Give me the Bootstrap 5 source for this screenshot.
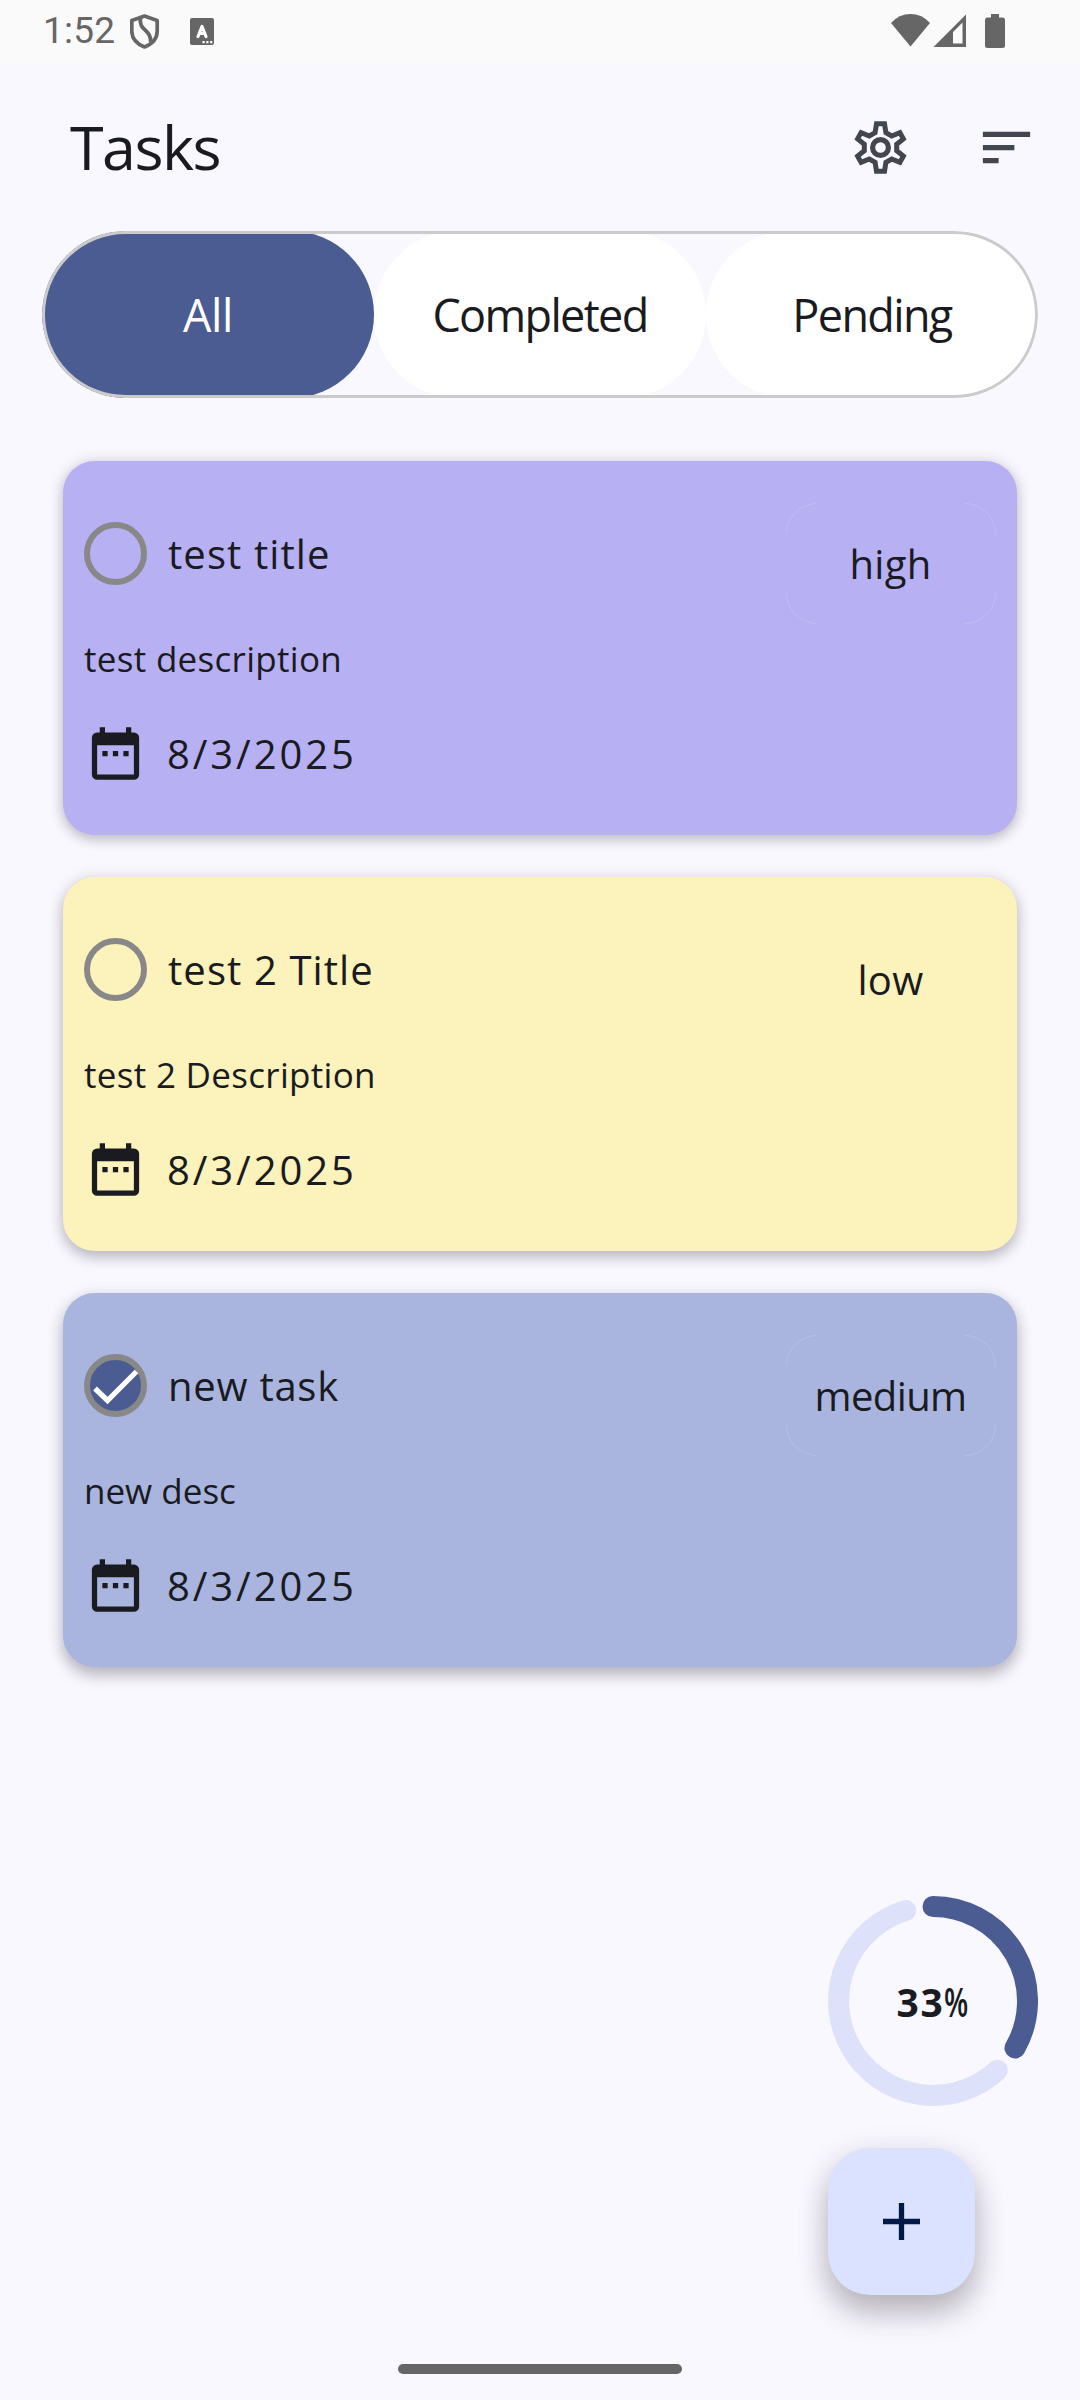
<!DOCTYPE html>
<html lang="en">
<head>
<meta charset="utf-8">
<meta name="viewport" content="width=device-width, initial-scale=1">
<title>Tasks</title>
<link rel="stylesheet" href="https://cdn.jsdelivr.net/npm/bootstrap@5.3.0/dist/css/bootstrap.min.css">
<script src="https://cdn.jsdelivr.net/npm/bootstrap@5.3.0/dist/js/bootstrap.bundle.min.js"></script>
<style>
  body { background: #f9f8ff; color: #1a1b20; font-family: "Open Sans", sans-serif; }
  svg { display: block; flex: none; }
  .screen { width: 1080px; height: 2400px; overflow: hidden; }
  .statusbar { height: 63px; background: #fafafa; color: #666; padding: 0 75px 0 43px; font: 400 37px/62px Roboto, sans-serif; }
  .clock { letter-spacing: .2px; width: 87px; }
  .appbar { height: 168px; padding: 0 42px 0 70px; }
  .appbar h1 { font-size: 61px; line-height: 62px; font-weight: 500; letter-spacing: -1.5px; margin: 0; }
  .appbar .btn-icon { padding: 0; border: 0; color: #44464f; }
  .tabs { width: 996px; height: 167px; margin: 0 42px; position: relative; border-radius: 84px; overflow: hidden; }
  .tabs::after { content: ""; position: absolute; inset: 0; border: 3px solid #cbcbcb; border-radius: 84px; pointer-events: none; }
  .tabs .nav-link { height: 167px; line-height: 167px; padding: 0; border-radius: 84px; background: #fff; color: #1a1b20; font-size: 45px; letter-spacing: -1.65px; }
  .tabs .nav-link.active { background: #4a5c92; color: #fff; letter-spacing: -.4px; }
  .tasklist { margin: 63px 63px 0; gap: 42px; }
  .task { height: 374px; border: 0; border-radius: 31.5px; padding: 42px 21px 0; color: #1a1b20; box-shadow: 0 1px 16px rgba(40,30,40,.16), 0 5px 12px rgba(40,30,40,.18); }
  .task-high { background: #b7b0f2; }
  .task-low { background: #fcf2bb; box-shadow: 0 2px 16px rgba(40,30,40,.16), 0 7px 14px rgba(40,30,40,.2); }
  .task-medium { background: #a9b4df; box-shadow: 0 3px 16px rgba(40,30,40,.16), 0 9px 15px rgba(40,30,40,.22); }
  .headline { height: 101px; gap: 21px; font-size: 40px; }
  .tick { width: 63px; height: 63px; border: 6px solid #888; border-radius: 50%; flex: none; }
  .tick.done { background: #4a5c92; }
  .prio { width: 210px; height: 121px; line-height: 121px; font-size: 40px; position: relative; padding-right: 1px; }
  .prio svg { position: absolute; inset: 0; }
  .descr { margin: 11px 0 0; height: 48px; line-height: 48px; font-size: 35px; letter-spacing: .3px; }
  .due { margin-top: 39px; gap: 20px; height: 63px; font-size: 40px; letter-spacing: 2.9px; }
  .ls-a { letter-spacing: 1.1px; } .ls-b { letter-spacing: .75px; } .ls-c { letter-spacing: .3px; } .ls-d { letter-spacing: -.6px; } .ls-e { letter-spacing: 0; }
  .corner { margin: auto 42px 69px 828px; gap: 42px; }
  .ring { width: 210px; height: 210px; position: relative; }
  .ring span { position: absolute; inset: 1px 0 0 0; line-height: 210px; text-align: center; font-size: 39px; font-weight: 700; letter-spacing: 1.5px; }
  .ring small { font-size: 39px; font-weight: 600; line-height: 1; display: inline-block; transform: scaleX(.72); transform-origin: 0 50%; margin-right: -10px; }
  .fab { width: 147px; height: 147px; padding: 0; border: 0; border-radius: 42px; background: #dae2ff; box-shadow: 0 6px 32px rgba(40,30,40,.14), 0 20px 30px rgba(40,30,40,.23); }
  .homebar { width: 284px; height: 10px; border-radius: 5px; background: #666; margin: 0 auto 26px; flex: none; }
</style>
</head>
<body>
<svg width="0" height="0" class="position-absolute">
  <symbol id="cal" viewBox="0 0 24 24"><path fill="#1a1b20" fill-rule="evenodd" d="M7 11h2v2H7zm4 0h2v2h-2zm4 0h2v2h-2zM5 4h1V2h2v2h8V2h2v2h1a2 2 0 0 1 2 2v14a2 2 0 0 1-2 2H5a2 2 0 0 1-2-2V6a2 2 0 0 1 2-2zm0 4.900V20h14V8.900z"/></symbol>
  <symbol id="edge" viewBox="0 0 210 121"><path fill="none" stroke="#fff" stroke-opacity=".16" d="M.5 31A30.500 30.500 0 0 1 31 .5M179 .5A30.500 30.500 0 0 1 209.500 31M209.500 90A30.500 30.500 0 0 1 179 120.500M31 120.500A30.500 30.500 0 0 1 .5 90"/></symbol>
</svg>
<main class="screen d-flex flex-column">
  <header class="statusbar d-flex flex-shrink-0">
    <span class="clock">1:52</span>
    <svg width="90" height="63" viewBox="130 0 90 63">
      <path d="M144.500 16 157.200 20.500V31C157.200 38.500 152 44 144.500 47 137 44 131.800 38.500 131.800 31V20.500Z" fill="none" stroke="#666" stroke-width="3.700" stroke-linejoin="round"/>
      <path d="M140.500 17.500C138 31 151.500 29 150.500 42" fill="none" stroke="#666" stroke-width="3.800"/>
      <rect x="190" y="18" width="24" height="27" rx="2" fill="#666"/>
      <path d="M198 36.500 202 26.500 206 36.500M199.500 33.500H204.500" fill="none" stroke="#fff" stroke-width="3.200" stroke-linecap="round" stroke-linejoin="round"/>
      <path d="M202.500 41h2.200v2.200h-2.200zm3.800 0h2.200v2.200h-2.200zm3.800 0h2.200v2.200h-2.200z" fill="#fff"/>
    </svg>
    <svg class="ms-auto" width="116" height="63" viewBox="889 0 116 63" fill="#666">
      <path d="M891 23Q899 14 910.500 14T930 23L910.500 46.500Z"/>
      <path fill-rule="evenodd" d="M933.500 47 966 14.500V47ZM953 32V43.500H962.500V22.500Z"/>
      <path d="M991 14h8v3.500h3.500q2.500 0 2.500 2.500v25.500q0 2.500-2.500 2.500h-15q-2.500 0-2.500-2.500V20q0-2.500 2.500-2.500h3.500z"/>
    </svg>
  </header>
  <div class="appbar d-flex align-items-center flex-shrink-0">
    <h1>Tasks</h1>
    <button class="btn btn-icon ms-auto" aria-label="Settings">
      <svg width="63" height="63" viewBox="-31.500 -31.500 63 63" fill="none" stroke="currentColor" stroke-width="5">
        <path d="M-4-23.800H4L5.400-14.900 11.200-11.500 19.400-14.900 22.900-8.600 16.200-3.200V3.200L22.900 8.600 19.400 14.900 11.200 11.500 5.400 14.900 4 23.800H-4L-5.400 14.900-11.200 11.500-19.400 14.900-22.900 8.600-16.200 3.200V-3.200L-22.900-8.600-19.400-14.900-11.200-11.500-5.400-14.900Z"/>
        <circle r="7.900" stroke-width="5.200"/>
      </svg>
    </button>
    <button class="btn btn-icon" aria-label="Sort" style="margin-left:63px">
      <svg width="63" height="63" viewBox="0 0 24 24" fill="currentColor"><path d="M3 6h18v2H3zM3 11h12v2H3zM3 16h6v2H3z"/></svg>
    </button>
  </div>
  <nav class="tabs nav nav-pills nav-fill flex-nowrap flex-shrink-0">
    <a class="nav-link active w-100">All</a>
    <a class="nav-link w-100">Completed</a>
    <a class="nav-link w-100">Pending</a>
  </nav>
  <section class="tasklist d-flex flex-column">
    <article class="card task task-high">
      <div class="d-flex justify-content-between">
        <div class="headline d-flex align-items-center"><span class="tick"></span><span class="ls-a">test title</span></div>
        <div class="prio text-center ls-c"><svg width="210" height="121"><use href="#edge"/></svg>high</div>
      </div>
      <p class="descr">test description</p>
      <div class="due d-flex align-items-center"><svg width="63" height="63"><use href="#cal"/></svg><span>8/3/2025</span></div>
    </article>
    <article class="card task task-low">
      <div class="d-flex justify-content-between">
        <div class="headline d-flex align-items-center"><span class="tick"></span><span class="ls-a">test 2 Title</span></div>
        <div class="prio text-center ls-c">low</div>
      </div>
      <p class="descr">test 2 Description</p>
      <div class="due d-flex align-items-center"><svg width="63" height="63"><use href="#cal"/></svg><span>8/3/2025</span></div>
    </article>
    <article class="card task task-medium">
      <div class="d-flex justify-content-between">
        <div class="headline d-flex align-items-center">
          <span class="tick done"><svg width="51" height="51" viewBox="6 6 51 51"><path d="M11 34.500 23.500 46.500 52.500 17.500" fill="none" stroke="#fff" stroke-width="5.200"/></svg></span>
          <span class="ls-b">new task</span>
        </div>
        <div class="prio text-center ls-d"><svg width="210" height="121"><use href="#edge"/></svg>medium</div>
      </div>
      <p class="descr ls-e">new desc</p>
      <div class="due d-flex align-items-center"><svg width="63" height="63"><use href="#cal"/></svg><span>8/3/2025</span></div>
    </article>
  </section>
  <div class="corner d-flex flex-column">
    <div class="ring">
      <svg width="210" height="210" viewBox="-105 -105 210 210" fill="none" stroke-width="21" stroke-linecap="round">
        <path stroke="#dde1f9" d="M64.400 69.200A94.500 94.500 0 1 1-27.300-90.500"/>
        <path stroke="#4a5c92" d="M0-94.500A94.500 94.500 0 0 1 82 47"/>
      </svg>
      <span>33<small>%</small></span>
    </div>
    <button class="btn fab d-flex align-items-center justify-content-center" aria-label="Add task">
      <svg width="37" height="37" viewBox="0 0 37 37"><path d="M18.500 0V37M0 18.500H37" stroke="#001946" stroke-width="5.300"/></svg>
    </button>
  </div>
  <div class="homebar"></div>
</main>
</body>
</html>
